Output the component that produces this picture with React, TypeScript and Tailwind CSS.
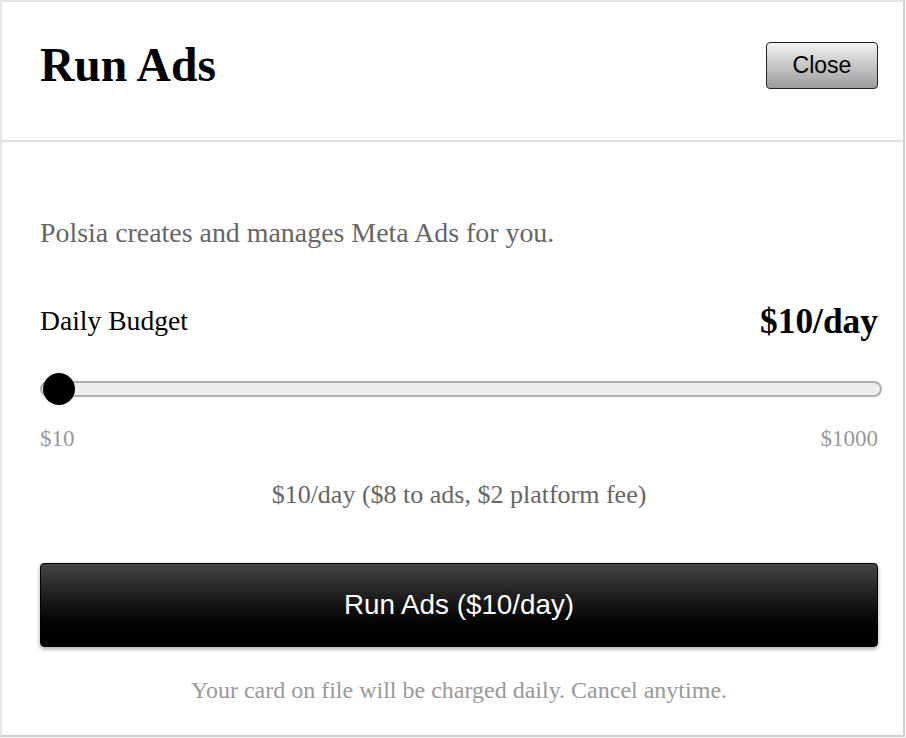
import React from "react";

export default function App() {
  const serif = { fontFamily: '"Liberation Serif", "Times New Roman", serif' };
  return (
    <div className="w-[906px] h-[738px] bg-white" style={serif}>
      <div className="w-[905px] h-[737px] bg-white border-2 border-[#e4e4e4] border-r-[#d0d0d0] border-b-[#d0d0d0] flex flex-col">
        <div className="h-[140px] flex items-center justify-between pl-[38px] pr-[25px] border-b-2 border-[#e0e0e0]">
          <h1 className="text-[47.6px] font-bold text-black leading-none -mt-[10px]">Run Ads</h1>
          <button
            className="w-[112px] h-[47px] rounded-[4px] border-[1.5px] border-[#222] bg-gradient-to-b from-[#f2f2f2] to-[#9c9c9c] text-[23px] text-black leading-none -mt-[11px]"
            style={{ fontFamily: '"Liberation Sans", Arial, sans-serif' }}
          >
            Close
          </button>
        </div>
        <div className="flex flex-col pl-[38px] pr-[25px] pt-[71px]">
          <p className="text-[27.9px] leading-[40px] text-[#666]">Polsia creates and manages Meta Ads for you.</p>
          <div className="mt-[46px] h-[44px] flex items-center justify-between">
            <span className="text-[27.6px] text-black">Daily Budget</span>
            <span className="text-[35.4px] font-bold text-black mt-[2px]">$10/day</span>
          </div>
          <div className="mt-[30px] h-[32px] relative flex items-center mr-[-4px]">
            <div className="w-full h-[16px] rounded-full bg-[#eeeeee] border-2 border-[#b0b0b0]" />
            <div className="absolute left-[3px] top-0 w-[32px] h-[32px] rounded-full bg-black" />
          </div>
          <div className="mt-[19px] h-[30px] flex items-center justify-between text-[23px] text-[#999]">
            <span>$10</span>
            <span>$1000</span>
          </div>
          <p className="mt-[23px] h-[36px] leading-[36px] text-center text-[26px] text-[#666]">
            $10/day ($8 to ads, $2 platform fee)
          </p>
          <button
            className="mt-[50px] h-[84px] w-full rounded-[4px] border border-black bg-gradient-to-b from-[#454545] to-[#000000] text-white text-[27.8px] shadow-[0_2px_4px_rgba(0,0,0,0.35)]"
            style={{ fontFamily: '"Liberation Sans", Arial, sans-serif' }}
          >
            Run Ads ($10/day)
          </button>
          <p className="mt-[28px] h-[30px] leading-[30px] text-center text-[24px] text-[#999]">
            Your card on file will be charged daily. Cancel anytime.
          </p>
        </div>
      </div>
    </div>
  );
}
